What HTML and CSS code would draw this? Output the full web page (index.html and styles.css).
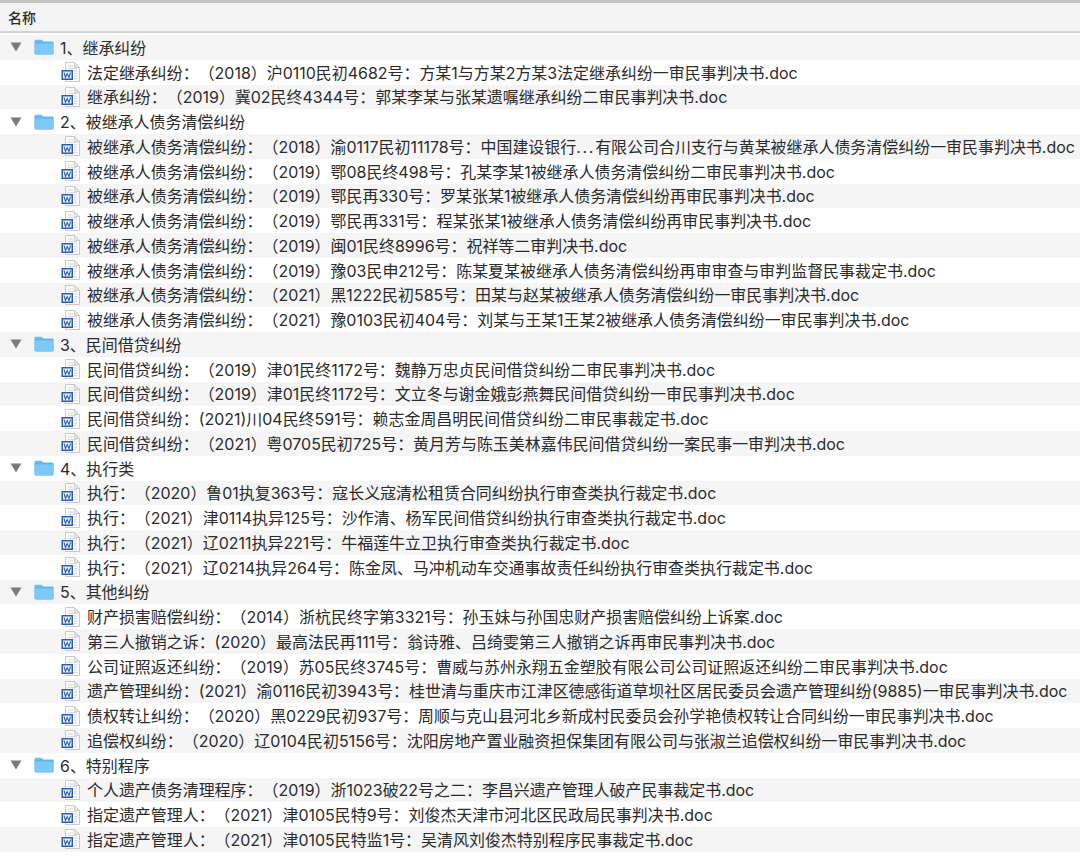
FILE: index.html
```html
<!DOCTYPE html>
<html lang="zh-CN">
<head>
<meta charset="utf-8">
<title>名称</title>
<link rel="stylesheet" href="styles.css">
</head>
<body>
<svg class="defs" width="0" height="0" aria-hidden="true">
  <symbol id="tri" viewBox="0 0 12 10"><path d="M0.5 0.5H11.5L6 9.5Z" fill="#7b7b7b"/></symbol>
  <symbol id="folder" viewBox="0 0 20 16">
    <path d="M0.5 2.2Q0.5 0.8 2 0.8H7Q8 0.8 8.6 1.6L9.4 2.6H18.4Q19.6 2.6 19.6 3.8V14Q19.6 15.4 18.2 15.4H2Q0.5 15.4 0.5 14Z" fill="#6dbdf0"/>
    <path d="M0.5 4.2H19.6V14Q19.6 15.4 18.2 15.4H2Q0.5 15.4 0.5 14Z" fill="#7cc8f6"/>
    <path d="M0.5 3.8H19.6" stroke="#4ea6e0" stroke-width="0.6"/>
  </symbol>
  <symbol id="doc" viewBox="0 0 20 20">
    <path d="M4.5 0.5H13.5L18.5 5.5V19.5H4.5Z" fill="#fbfbfb" stroke="#bdbdbd" stroke-width="0.8"/>
    <path d="M13.5 0.5V5.5H18.5Z" fill="#e4e4e4" stroke="#bdbdbd" stroke-width="0.6"/>
    <path d="M7 4H12M7 6.5H16M13 9H16M13 11.5H16M13 14H16M7 16.5H16" stroke="#cfcfcf" stroke-width="0.8"/>
    <rect x="0.5" y="8" width="11.5" height="10" fill="#2a5db0"/>
    <rect x="2" y="9.5" width="8.5" height="7" fill="#f4f7fc"/>
    <path d="M3 10.5L4.5 15.5L6.2 11.5L8 15.5L9.5 10.5" fill="none" stroke="#2a5db0" stroke-width="1.1"/>
  </symbol>
</svg>
<main class="finder">
  <header class="head">名称</header>
  <ul class="list">
    <li class="row folder"><svg class="tri"><use href="#tri"/></svg><svg class="fold"><use href="#folder"/></svg><span>1、继承纠纷</span></li>
    <li class="row file"><svg class="doc"><use href="#doc"/></svg><span>法定继承纠纷：（2018）沪0110民初4682号：方某1与方某2方某3法定继承纠纷一审民事判决书.doc</span></li>
    <li class="row file"><svg class="doc"><use href="#doc"/></svg><span>继承纠纷：（2019）冀02民终4344号：郭某李某与张某遗嘱继承纠纷二审民事判决书.doc</span></li>
    <li class="row folder"><svg class="tri"><use href="#tri"/></svg><svg class="fold"><use href="#folder"/></svg><span>2、被继承人债务清偿纠纷</span></li>
    <li class="row file"><svg class="doc"><use href="#doc"/></svg><span>被继承人债务清偿纠纷：（2018）渝0117民初11178号：中国建设银行<i class="dots">...</i>有限公司合川支行与黄某被继承人债务清偿纠纷一审民事判决书.doc</span></li>
    <li class="row file"><svg class="doc"><use href="#doc"/></svg><span>被继承人债务清偿纠纷：（2019）鄂08民终498号：孔某李某1被继承人债务清偿纠纷二审民事判决书.doc</span></li>
    <li class="row file"><svg class="doc"><use href="#doc"/></svg><span>被继承人债务清偿纠纷：（2019）鄂民再330号：罗某张某1被继承人债务清偿纠纷再审民事判决书.doc</span></li>
    <li class="row file"><svg class="doc"><use href="#doc"/></svg><span>被继承人债务清偿纠纷：（2019）鄂民再331号：程某张某1被继承人债务清偿纠纷再审民事判决书.doc</span></li>
    <li class="row file"><svg class="doc"><use href="#doc"/></svg><span>被继承人债务清偿纠纷：（2019）闽01民终8996号：祝祥等二审判决书.doc</span></li>
    <li class="row file"><svg class="doc"><use href="#doc"/></svg><span>被继承人债务清偿纠纷：（2019）豫03民申212号：陈某夏某被继承人债务清偿纠纷再审审查与审判监督民事裁定书.doc</span></li>
    <li class="row file"><svg class="doc"><use href="#doc"/></svg><span>被继承人债务清偿纠纷：（2021）黑1222民初585号：田某与赵某被继承人债务清偿纠纷一审民事判决书.doc</span></li>
    <li class="row file"><svg class="doc"><use href="#doc"/></svg><span>被继承人债务清偿纠纷：（2021）豫0103民初404号：刘某与王某1王某2被继承人债务清偿纠纷一审民事判决书.doc</span></li>
    <li class="row folder"><svg class="tri"><use href="#tri"/></svg><svg class="fold"><use href="#folder"/></svg><span>3、民间借贷纠纷</span></li>
    <li class="row file"><svg class="doc"><use href="#doc"/></svg><span>民间借贷纠纷：（2019）津01民终1172号：魏静万忠贞民间借贷纠纷二审民事判决书.doc</span></li>
    <li class="row file"><svg class="doc"><use href="#doc"/></svg><span>民间借贷纠纷：（2019）津01民终1172号：文立冬与谢金娥彭燕舞民间借贷纠纷一审民事判决书.doc</span></li>
    <li class="row file"><svg class="doc"><use href="#doc"/></svg><span>民间借贷纠纷：(2021)川04民终591号：赖志金周昌明民间借贷纠纷二审民事裁定书.doc</span></li>
    <li class="row file"><svg class="doc"><use href="#doc"/></svg><span>民间借贷纠纷：（2021）粤0705民初725号：黄月芳与陈玉美林嘉伟民间借贷纠纷一案民事一审判决书.doc</span></li>
    <li class="row folder"><svg class="tri"><use href="#tri"/></svg><svg class="fold"><use href="#folder"/></svg><span>4、执行类</span></li>
    <li class="row file"><svg class="doc"><use href="#doc"/></svg><span>执行：（2020）鲁01执复363号：寇长义寇清松租赁合同纠纷执行审查类执行裁定书.doc</span></li>
    <li class="row file"><svg class="doc"><use href="#doc"/></svg><span>执行：（2021）津0114执异125号：沙作清、杨军民间借贷纠纷执行审查类执行裁定书.doc</span></li>
    <li class="row file"><svg class="doc"><use href="#doc"/></svg><span>执行：（2021）辽0211执异221号：牛福莲牛立卫执行审查类执行裁定书.doc</span></li>
    <li class="row file"><svg class="doc"><use href="#doc"/></svg><span>执行：（2021）辽0214执异264号：陈金凤、马冲机动车交通事故责任纠纷执行审查类执行裁定书.doc</span></li>
    <li class="row folder"><svg class="tri"><use href="#tri"/></svg><svg class="fold"><use href="#folder"/></svg><span>5、其他纠纷</span></li>
    <li class="row file"><svg class="doc"><use href="#doc"/></svg><span>财产损害赔偿纠纷：（2014）浙杭民终字第3321号：孙玉妹与孙国忠财产损害赔偿纠纷上诉案.doc</span></li>
    <li class="row file"><svg class="doc"><use href="#doc"/></svg><span>第三人撤销之诉：(2020）最高法民再111号：翁诗雅、吕绮雯第三人撤销之诉再审民事判决书.doc</span></li>
    <li class="row file"><svg class="doc"><use href="#doc"/></svg><span>公司证照返还纠纷：（2019）苏05民终3745号：曹威与苏州永翔五金塑胶有限公司公司证照返还纠纷二审民事判决书.doc</span></li>
    <li class="row file"><svg class="doc"><use href="#doc"/></svg><span>遗产管理纠纷：(2021）渝0116民初3943号：桂世清与重庆市江津区德感街道草坝社区居民委员会遗产管理纠纷(9885)一审民事判决书.doc</span></li>
    <li class="row file"><svg class="doc"><use href="#doc"/></svg><span>债权转让纠纷：（2020）黑0229民初937号：周顺与克山县河北乡新成村民委员会孙学艳债权转让合同纠纷一审民事判决书.doc</span></li>
    <li class="row file"><svg class="doc"><use href="#doc"/></svg><span>追偿权纠纷：（2020）辽0104民初5156号：沈阳房地产置业融资担保集团有限公司与张淑兰追偿权纠纷一审民事判决书.doc</span></li>
    <li class="row folder"><svg class="tri"><use href="#tri"/></svg><svg class="fold"><use href="#folder"/></svg><span>6、特别程序</span></li>
    <li class="row file"><svg class="doc"><use href="#doc"/></svg><span>个人遗产债务清理程序：（2019）浙1023破22号之二：李昌兴遗产管理人破产民事裁定书.doc</span></li>
    <li class="row file"><svg class="doc"><use href="#doc"/></svg><span>指定遗产管理人：（2021）津0105民特9号：刘俊杰天津市河北区民政局民事判决书.doc</span></li>
    <li class="row file"><svg class="doc"><use href="#doc"/></svg><span>指定遗产管理人：（2021）津0105民特监1号：吴清风刘俊杰特别程序民事裁定书.doc</span></li>
  </ul>
</main>
</body>
</html>
```
FILE: styles.css
```css
html, body {
  margin: 0;
  padding: 0;
  background: #fff;
}
body {
  width: 1080px;
  height: 856px;
  overflow: hidden;
  font-family: Inter, "Noto Sans CJK SC", sans-serif;
  color: #2b2b2b;
  text-spacing-trim: space-all;
}
.defs {
  position: absolute;
}
.finder {
  display: flex;
  flex-direction: column;
}
.head {
  box-sizing: border-box;
  height: 33px;
  padding: 0 0 1px 8px;
  display: flex;
  align-items: center;
  border-top: 3px solid #c4c4c4;
  border-bottom: 2px solid #d4d4d4;
  background: #f4f4f4;
  font-size: 14px;
  font-weight: 500;
  color: #2b2b2b;
}
.list {
  list-style: none;
  margin: 2px 0 0;
  padding: 0;
}
.row {
  height: 24.75px;
  display: flex;
  align-items: center;
  font-size: 15.96px;
  white-space: nowrap;
}
.row > span {
  padding-bottom: 1px;
}
.dots {
  font-style: normal;
  letter-spacing: 1.7px;
}
.row:nth-child(odd) {
  background: #f5f5f5;
}
.row.folder {
  padding-left: 10px;
}
.row.file {
  padding-left: 61px;
}
.tri {
  width: 12px;
  height: 10px;
  margin-right: 12px;
  flex: none;
}
.fold {
  width: 20px;
  height: 16px;
  margin-right: 6px;
  flex: none;
}
.doc {
  width: 20px;
  height: 20px;
  margin-right: 6px;
  flex: none;
}
```
